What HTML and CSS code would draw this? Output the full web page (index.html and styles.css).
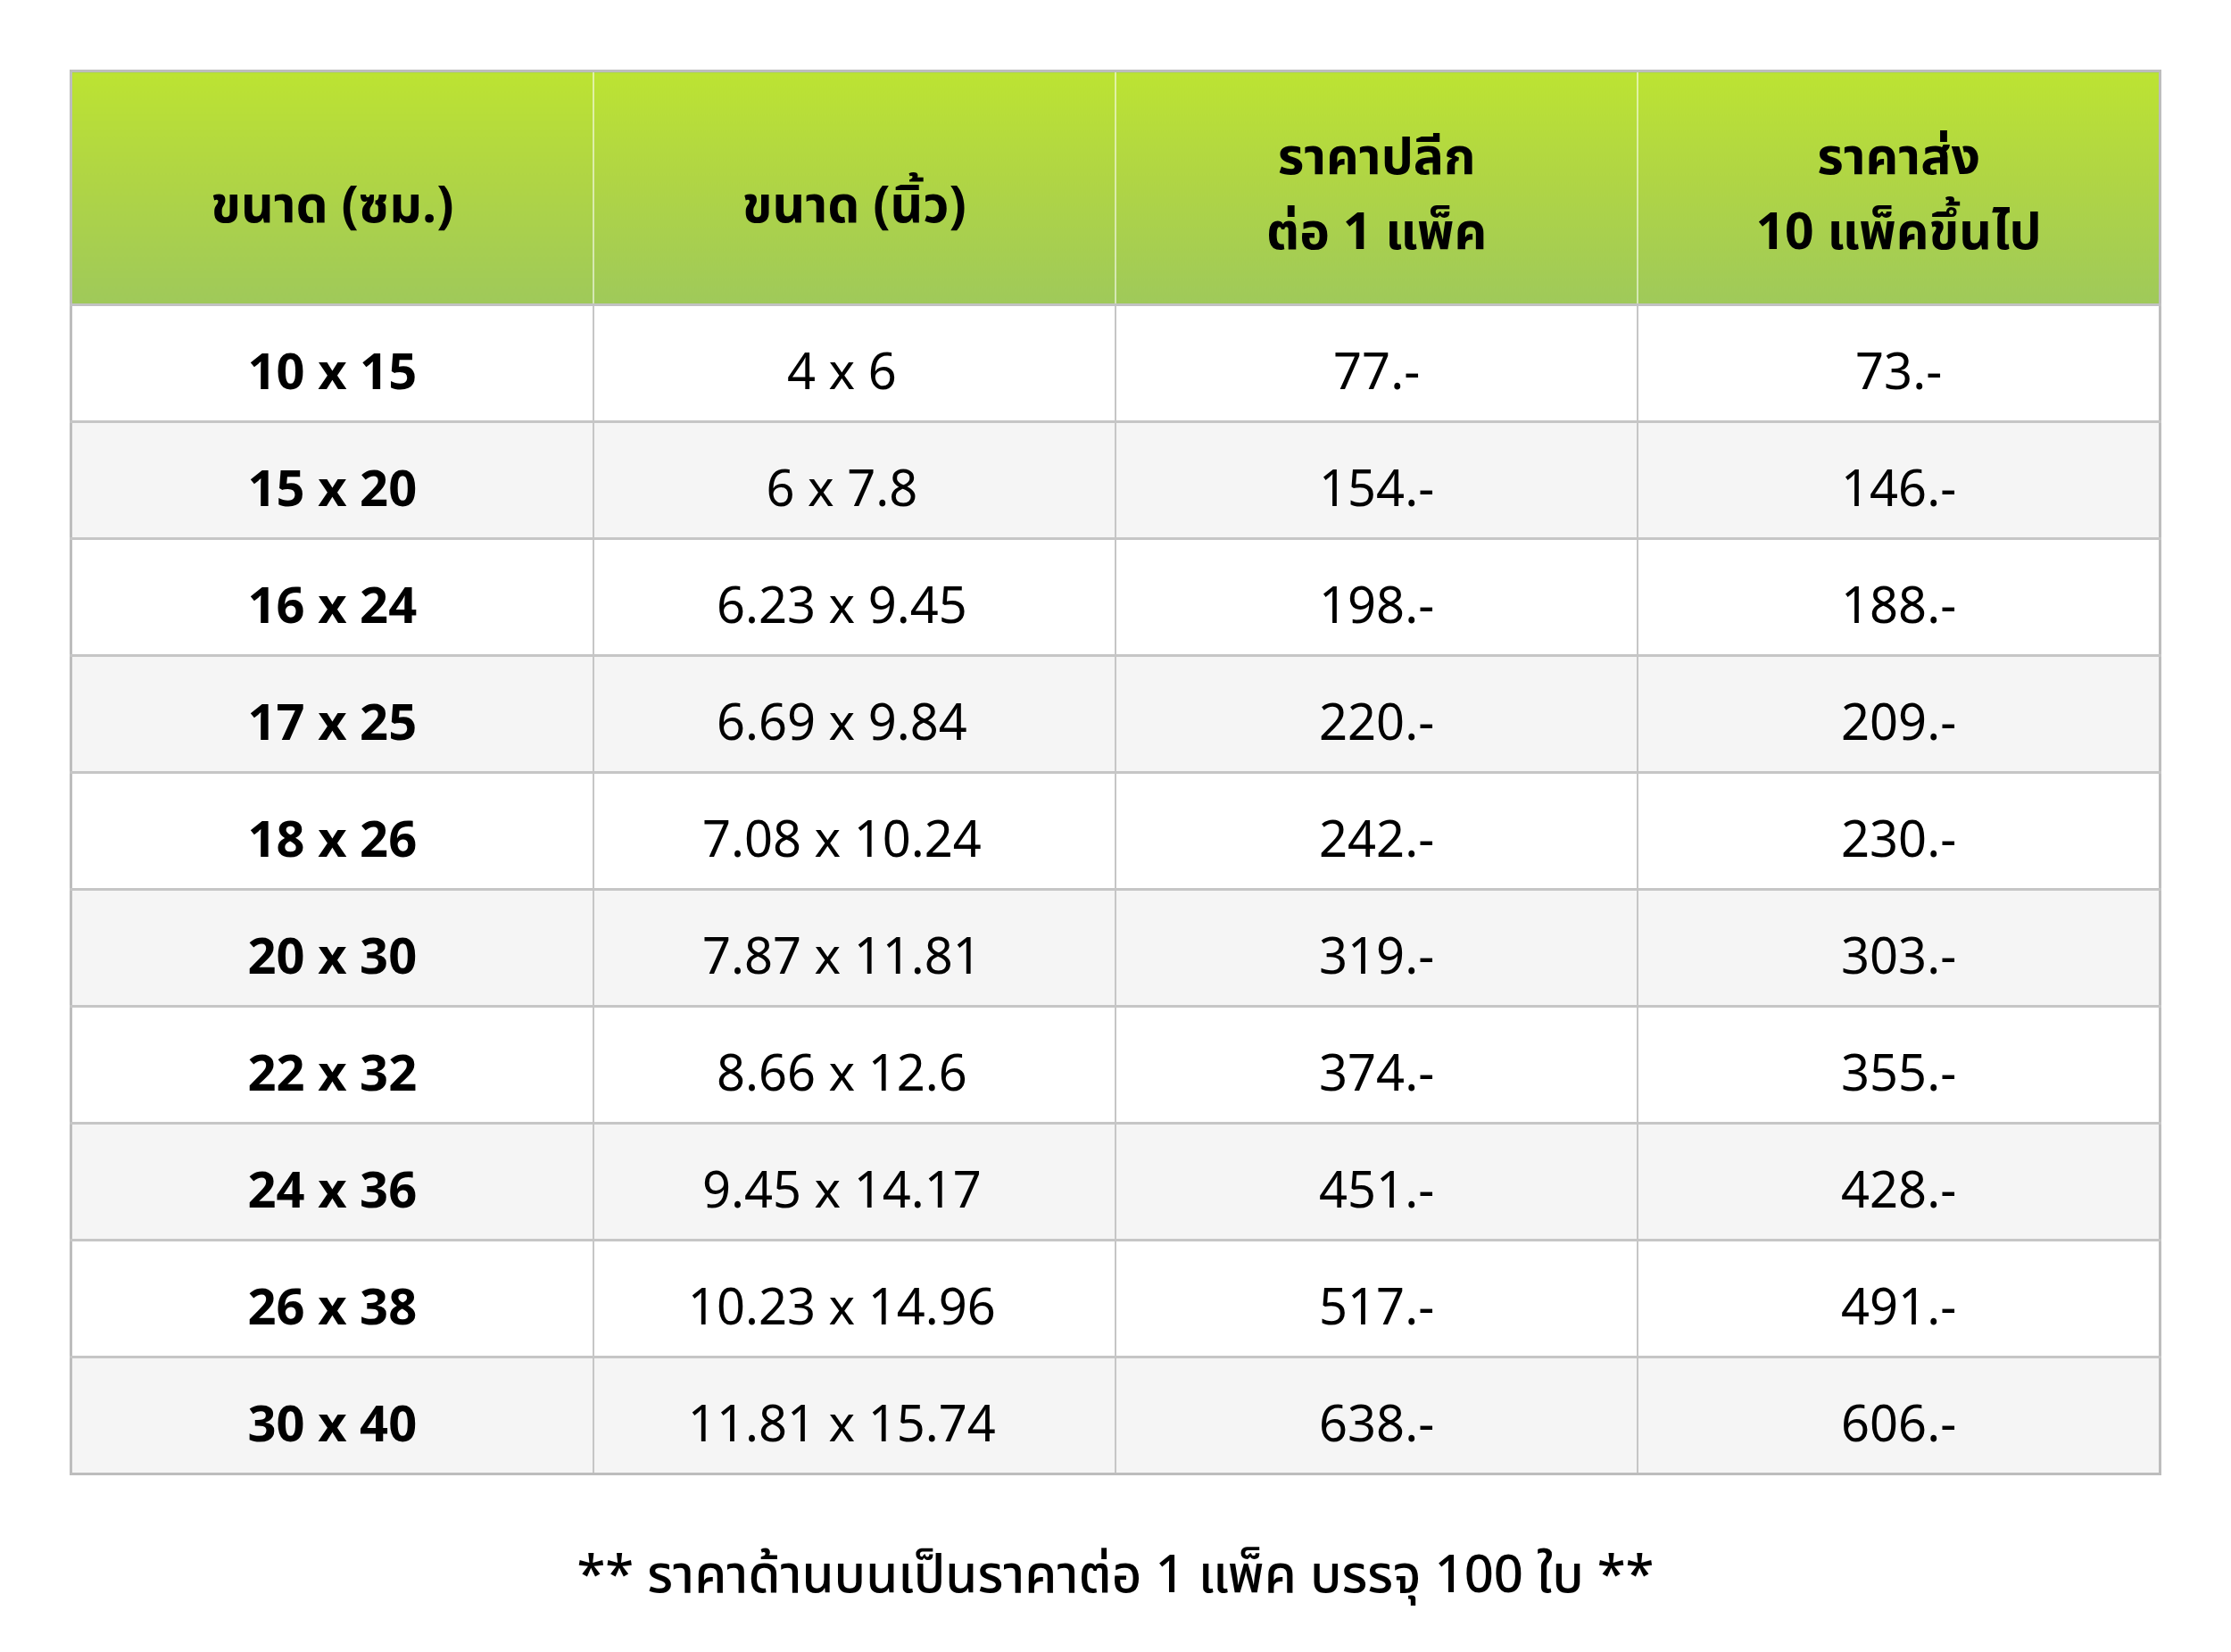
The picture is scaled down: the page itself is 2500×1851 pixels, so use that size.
FILE: index.html
```html
<!DOCTYPE html>
<html lang="th">
<head>
<meta charset="utf-8">
<title>ตารางราคา</title>
<link rel="stylesheet" href="styles.css">
</head>
<body>
<main class="page">
  <table class="price-table">
    <thead>
      <tr>
        <th class="single">ขนาด (ซม.)</th>
        <th class="single">ขนาด (นิ้ว)</th>
        <th>ราคาปลีก<br>ต่อ 1 แพ็ค</th>
        <th>ราคาส่ง<br>10 แพ็คขึ้นไป</th>
      </tr>
    </thead>
    <tbody>
      <tr><td class="size">10 x 15</td><td class="inch">4 x 6</td><td>77.-</td><td>73.-</td></tr>
      <tr><td class="size">15 x 20</td><td class="inch">6 x 7.8</td><td>154.-</td><td>146.-</td></tr>
      <tr><td class="size">16 x 24</td><td class="inch">6.23 x 9.45</td><td>198.-</td><td>188.-</td></tr>
      <tr><td class="size">17 x 25</td><td class="inch">6.69 x 9.84</td><td>220.-</td><td>209.-</td></tr>
      <tr><td class="size">18 x 26</td><td class="inch">7.08 x 10.24</td><td>242.-</td><td>230.-</td></tr>
      <tr><td class="size">20 x 30</td><td class="inch">7.87 x 11.81</td><td>319.-</td><td>303.-</td></tr>
      <tr><td class="size">22 x 32</td><td class="inch">8.66 x 12.6</td><td>374.-</td><td>355.-</td></tr>
      <tr><td class="size">24 x 36</td><td class="inch">9.45 x 14.17</td><td>451.-</td><td>428.-</td></tr>
      <tr><td class="size">26 x 38</td><td class="inch">10.23 x 14.96</td><td>517.-</td><td>491.-</td></tr>
      <tr><td class="size">30 x 40</td><td class="inch">11.81 x 15.74</td><td>638.-</td><td>606.-</td></tr>
    </tbody>
  </table>
  <p class="note">** ราคาด้านบนเป็นราคาต่อ 1 แพ็ค บรรจุ 100 ใบ **</p>
</main>
</body>
</html>
```

FILE: styles.css
```css
html, body {
  margin: 0;
  padding: 0;
  background: #ffffff;
}

body {
  font-family: "Noto Sans Thai", "Noto Sans", "DejaVu Sans", sans-serif;
  color: #000000;
}

.page {
  padding: 78px 78px 0 78px;
}

.price-table {
  width: 2344px;
  border-collapse: collapse;
  table-layout: fixed;
  border: 3px solid #bdbdbd;
}

.price-table th {
  height: 262px;
  padding: 18px 0 0 0;
  box-sizing: border-box;
  font-size: 57px;
  font-weight: 700;
  line-height: 84px;
  text-align: center;
  vertical-align: middle;
  background: linear-gradient(to bottom, #bce332 0%, #b0d544 45%, #9fc95a 100%);
  border-right: 2px solid rgba(255, 255, 255, 0.55);
  border-bottom: 3px solid #c2c2c2;
}

.price-table th.single {
  padding-top: 42px;
}

.price-table th:last-child {
  border-right: 3px solid #bdbdbd;
}

.price-table td {
  height: 131px;
  padding: 23px 0 0 0;
  box-sizing: border-box;
  font-size: 56px;
  font-weight: 400;
  text-align: center;
  vertical-align: middle;
  border-right: 2px solid #c6c6c6;
  border-top: 3px solid #c6c6c6;
}

.price-table td.size {
  font-weight: 700;
}

.price-table td.inch {
  padding-right: 28px;
}

.price-table tbody tr:nth-child(odd) td {
  background: #ffffff;
}

.price-table tbody tr:nth-child(even) td {
  background: #f5f5f5;
}

.note {
  margin: 69px 0 0 0;
  text-align: center;
  font-size: 58px;
  font-weight: 500;
}
```
